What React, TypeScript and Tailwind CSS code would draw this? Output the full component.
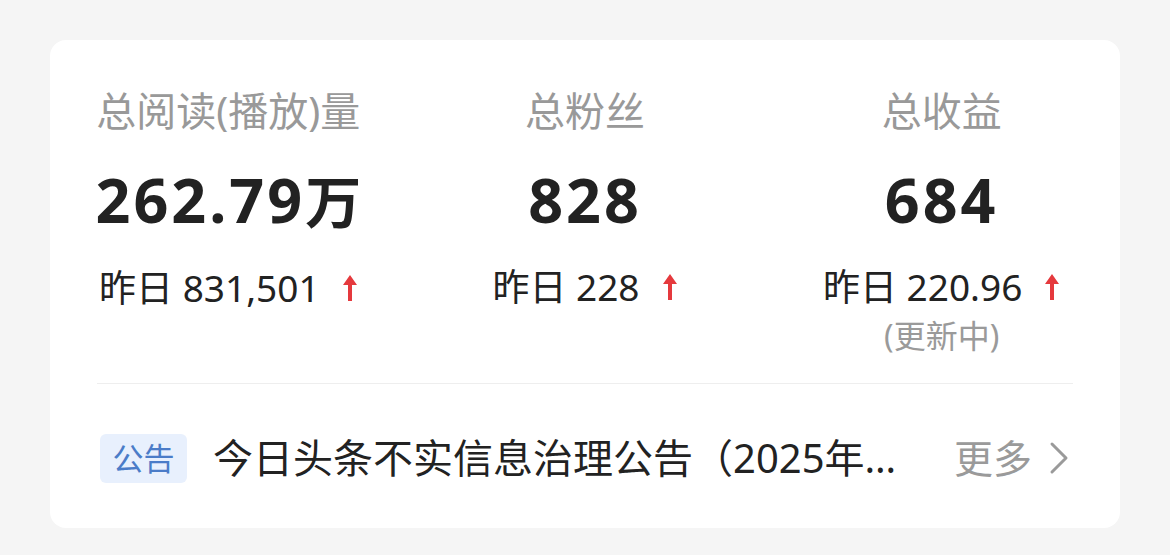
const CJK = "font-['Noto_Sans','Noto_Sans_CJK_SC',sans-serif]";

function UpArrow() {
  return (
    <svg width="16" height="28" viewBox="0 0 16 28" className="shrink-0">
      <path d="M8 1 L15 11 L10 11 L10 27 L6 27 L6 11 L1 11 Z" fill="#e5393d" />
    </svg>
  );
}

function Stat({ title, value, unit, yesterday, note }: { title: string; value: string; unit?: string; yesterday: string; note?: string }) {
  return (
    <div className="flex flex-col items-center">
      <div className="text-[40px] leading-[46px] text-[#999999]">{title}</div>
      <div className="mt-[30px] flex items-baseline text-[61px] leading-[72px] font-bold tracking-[3px] text-[#222222]">
        {value}
        {unit && <span className="text-[56px] tracking-normal">{unit}</span>}
      </div>
      <div className="mt-[28px] flex items-center gap-[22px] h-[46px]">
        <span className="text-[37px] leading-[46px] text-[#222222]">昨日 {yesterday}</span>
        <UpArrow />
      </div>
      {note && <div className="mt-[6px] text-[32px] leading-[40px] text-[#9a9a9a]">{note}</div>}
    </div>
  );
}

export default function App() {
  return (
    <div className={`w-[1170px] h-[555px] bg-[#f5f5f5] pt-[40px] pl-[50px] ${CJK}`}>
      <div className="w-[1070px] h-[488px] bg-white rounded-[16px] flex flex-col">
        <div className="grid grid-cols-3 pt-[48px] h-[343px]">
          <Stat title="总阅读(播放)量" value="262.79" unit="万" yesterday="831,501" />
          <Stat title="总粉丝" value="828" yesterday="228" />
          <Stat title="总收益" value="684" yesterday="220.96" note="(更新中)" />
        </div>
        <div className="mx-[47px] h-px bg-[#eeeeee]" />
        <div className="flex items-center pl-[50px] pr-[50px] mt-[49px] h-[50px]">
          <div className="w-[87px] h-[49px] rounded-[6px] bg-[#e8f0fd] text-[#4b7cc8] text-[31px] flex items-center justify-center shrink-0">公告</div>
          <div className="ml-[26px] flex-1 min-w-0 truncate text-[40px] leading-[50px] text-[#222222]">今日头条不实信息治理公告（2025年第一期）</div>
          <div className="ml-[26px] text-[39px] leading-[50px] text-[#9a9a9a] shrink-0">更多</div>
          <svg width="22" height="34" viewBox="0 0 22 34" className="ml-[16px] shrink-0">
            <path d="M4 3 L18 17 L4 31" fill="none" stroke="#9a9a9a" strokeWidth="3" strokeLinecap="round" strokeLinejoin="round" />
          </svg>
        </div>
      </div>
    </div>
  );
}
